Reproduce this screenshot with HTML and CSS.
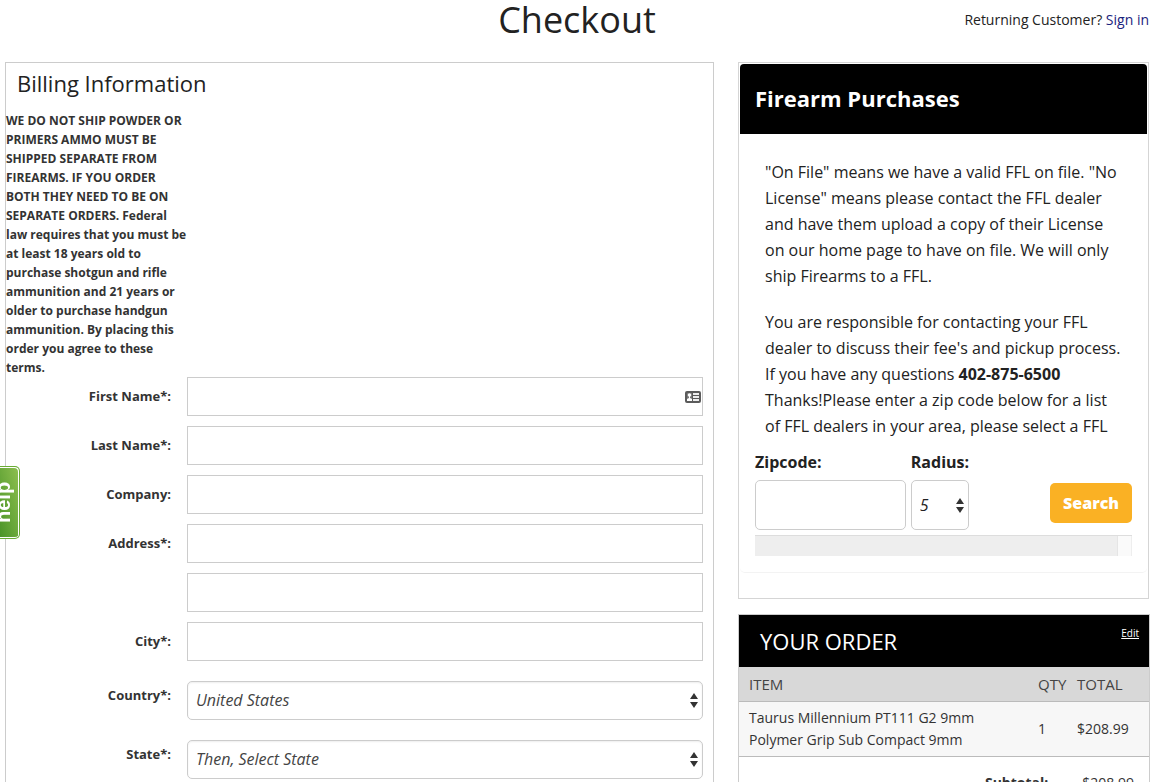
FILE: index.html
```html
<!DOCTYPE html>
<html lang="en">
<head>
    <meta charset="UTF-8">
    <meta name="viewport" content="width=device-width, initial-scale=1.0">
    <title>Checkout</title>
    <link rel="stylesheet" href="styles.css">
</head>
<body>
    <header class="page-header">
        <h1>Checkout</h1>
        <p class="returning">Returning Customer? <a href="#">Sign in</a></p>
    </header>
    <main class="checkout">
        <form class="billing">
            <h2>Billing Information</h2>
            <p class="notice">WE DO NOT SHIP POWDER OR PRIMERS AMMO MUST BE SHIPPED SEPARATE FROM FIREARMS. IF YOU ORDER BOTH THEY NEED TO BE ON SEPARATE ORDERS. Federal law requires that you must be at least 18 years old to purchase shotgun and rifle ammunition and 21 years or older to purchase handgun ammunition. By placing this order you agree to these terms.</p>
            <div class="row">
                <label for="first-name">First Name*:</label>
                <div class="field">
                    <input type="text" id="first-name">
                    <svg class="card-icon" width="16" height="12" viewBox="0 0 16 12" aria-hidden="true">
                        <rect width="16" height="12" rx="2" fill="#5b5b5b"/>
                        <path d="M2 2h5v8H2z" fill="#777"/>
                        <circle cx="4.5" cy="4" r="1.8" fill="#fff"/>
                        <path d="M4 5h1v2l2 1v2H2V8l2-1z" fill="#fff"/>
                        <path d="M8 2h6v2H8zM8 5h6v2H8zM8 8h6v2H8z" fill="#eee"/>
                    </svg>
                </div>
            </div>
            <div class="row">
                <label for="last-name">Last Name*:</label>
                <input type="text" id="last-name">
            </div>
            <div class="row">
                <label for="company">Company:</label>
                <input type="text" id="company">
            </div>
            <div class="row">
                <label for="address">Address*:</label>
                <input type="text" id="address">
            </div>
            <div class="row">
                <span></span>
                <input type="text" id="address2" aria-label="Address line 2">
            </div>
            <div class="row">
                <label for="city">City*:</label>
                <input type="text" id="city">
            </div>
            <div class="row">
                <label for="country">Country*:</label>
                <select id="country">
                    <option>United States</option>
                </select>
            </div>
            <div class="row">
                <label for="state">State*:</label>
                <select id="state">
                    <option>Then, Select State</option>
                </select>
            </div>
        </form>
        <aside class="sidebar">
            <section class="firearm">
                <div class="card">
                    <h3>Firearm Purchases</h3>
                    <div class="card-body">
                        <div class="info">
                            <p>"On File" means we have a valid FFL on file. "No License" means please contact the FFL dealer and have them upload a copy of their License on our home page to have on file. We will only ship Firearms to a FFL.</p>
                            <p>You are responsible for contacting your FFL dealer to discuss their fee's and pickup process. If you have any questions <b>402-875-6500</b> Thanks!Please enter a zip code below for a list of FFL dealers in your area, please select a FFL</p>
                        </div>
                        <form class="search">
                            <div class="zip">
                                <label for="zipcode">Zipcode:</label>
                                <input type="text" id="zipcode">
                            </div>
                            <div class="radius">
                                <label for="radius">Radius:</label>
                                <select id="radius">
                                    <option>5</option>
                                </select>
                            </div>
                            <button type="button">Search</button>
                        </form>
                        <div class="results"></div>
                    </div>
                </div>
            </section>
            <section class="order">
                <div class="order-head">
                    <h3>YOUR ORDER</h3>
                    <a href="#">Edit</a>
                </div>
                <table>
                    <thead>
                        <tr><th>ITEM</th><th class="qty">QTY</th><th class="total">TOTAL</th></tr>
                    </thead>
                    <tbody>
                        <tr><td>Taurus Millennium PT111 G2 9mm Polymer Grip Sub Compact 9mm</td><td>1</td><td>$208.99</td></tr>
                    </tbody>
                </table>
                <dl class="totals">
                    <dt>Subtotal:</dt>
                    <dd>$208.99</dd>
                </dl>
            </section>
        </aside>
    </main>
    <a class="help" href="#"><span>help</span></a>
</body>
</html>
```
FILE: styles.css
```css
* {
    box-sizing: border-box;
}

html {
    scrollbar-width: none;
}

body {
    margin: 0;
    padding: 0 13px 0 5px;
    background-color: #fff;
    color: #222;
    font-family: "Open Sans", "Liberation Sans", sans-serif;
    font-size: 14px;
}

h1, h2, h3, p, dl, dd {
    margin: 0;
    font-weight: normal;
}

/* header */
.page-header {
    display: grid;
    grid-template-columns: 1fr auto 1fr;
    height: 62px;
    padding-right: 1px;
}

.page-header h1 {
    grid-column: 2;
    font-size: 36px;
    line-height: 40px;
}

.returning {
    text-align: right;
    line-height: 40px;
}

.returning a {
    color: #1a237e;
    text-decoration: none;
}

.checkout {
    display: grid;
    grid-template-columns: minmax(0, 1fr) 412px;
    gap: 24px;
}

/* billing form */
.billing {
    border: 1px solid #ccc;
    padding-bottom: 20px;
}

.billing h2 {
    padding: 0 11px;
    font-size: 22px;
    line-height: 40px;
    margin-bottom: 8px;
}

.notice {
    width: 181px;
    color: #333;
    font-size: 12px;
    font-weight: bold;
    line-height: 19px;
}

.row {
    display: grid;
    grid-template-columns: 181px minmax(0, 1fr);
    align-items: center;
    padding-right: 10px;
    margin-bottom: 10px;
}

.row label {
    padding: 0 16px 2px 0;
    color: #333;
    font-size: 13px;
    font-weight: bold;
    text-align: right;
}

input, select {
    display: block;
    width: 100%;
    height: 39px;
    padding: 0 8px;
    border: 1px solid #ccc;
    border-radius: 0;
    background-color: #fff;
    font: inherit;
}

select {
    appearance: none;
    border-radius: 5px;
    color: #444;
    font-size: 16px;
    font-style: italic;
    background-image: url("data:image/svg+xml,%3Csvg xmlns='http://www.w3.org/2000/svg' width='8' height='15'%3E%3Cpath d='M4 0l4 6H0zM4 15l4-6H0z' fill='%23333'/%3E%3C/svg%3E");
    background-repeat: no-repeat;
    background-position: right 4px center;
}

.row select {
    margin-top: 10px;
    padding-bottom: 2px;
    box-shadow: inset 0 1px 2px #eee;
}

.field {
    position: relative;
}

.card-icon {
    position: absolute;
    right: 2px;
    top: 14px;
}

/* firearm card */
.firearm {
    padding: 1px 1px 25px;
    border: 1px solid #d5d5d5;
    margin: 0 1px 15px 0;
}

.card {
    border-bottom: 1px solid #f3f3f3;
    border-radius: 5px;
}

.card h3 {
    padding: 0 15px 2px;
    border-radius: 4px 4px 0 0;
    background-color: #000;
    color: #fff;
    font-size: 22px;
    font-weight: bold;
    line-height: 68px;
}

.card-body {
    padding: 15px 15px 16px;
}

.info {
    padding: 10px 10px 0;
    margin-bottom: 12px;
    font-size: 16px;
    line-height: 26px;
}

.info p + p {
    margin-top: 20px;
}

.search {
    display: flex;
    align-items: flex-end;
    gap: 5px;
    margin-bottom: 5px;
}

.search label {
    display: block;
    margin-bottom: 7px;
    font-size: 16px;
    font-weight: bold;
    line-height: 22px;
}

.search input, .search select {
    height: 50px;
    border-radius: 5px;
}

.search select {
    color: #222;
}

.zip {
    width: 40%;
}

.radius {
    width: 58px;
}

.search button {
    height: 40px;
    padding: 0 13px;
    border: none;
    border-radius: 5px;
    margin: 0 0 7px auto;
    background-color: #fab124;
    color: #fff;
    font: 800 16px "Open Sans", "Liberation Sans", sans-serif;
}

.results {
    height: 21px;
    border-top: 1px solid #ddd;
    background: linear-gradient(to left, #eee 1px, #fafafa 1px, #fafafa 14px, #e5e5e5 14px, #e5e5e5 15px, #eee 15px);
}

/* order summary */
.order {
    border: 1px solid #ccc;
    color: #333;
}

.order-head {
    display: flex;
    justify-content: space-between;
    align-items: flex-start;
    padding: 0 10px 0 21px;
    background-color: #000;
}

.order-head h3 {
    color: #fff;
    font-size: 22px;
    line-height: 52px;
}

.order-head a {
    margin-top: 11px;
    color: #fff;
    font-size: 10px;
}

table {
    width: 100%;
    border-collapse: collapse;
    table-layout: fixed;
}

th, td {
    padding: 5px 0 5px 10px;
    border-bottom: 1px solid #bbb;
    line-height: 22px;
    text-align: left;
}

th {
    height: 34px;
    background-color: #d8d8d8;
    font-size: 15px;
    font-weight: normal;
    color: #444;
}

td {
    background-color: #f7f7f7;
}

td:first-child {
    padding-right: 40px;
}

.qty {
    width: 39px;
}

.total {
    width: 82px;
}

.totals {
    display: grid;
    grid-template-columns: 1fr auto;
    column-gap: 34px;
    padding: 15px;
    line-height: 22px;
}

.totals dt {
    font-weight: bold;
    text-align: right;
}

/* help tab fixed on the left edge */
.help {
    position: fixed;
    left: 0;
    top: 466px;
    display: flex;
    justify-content: flex-end;
    width: 20px;
    height: 73px;
    border: 1px solid #6aac35;
    border-left: none;
    border-radius: 0 5px 5px 0;
    box-shadow: inset -1px 1px #fff, inset 0 -1px #fff;
    background: linear-gradient(75deg, #4a9428, #8fc050);
    color: #fff;
    text-decoration: none;
    overflow: hidden;
}

.help span {
    writing-mode: vertical-rl;
    rotate: 180deg;
    padding-left: 5px;
    font: bold 20px/22px "Liberation Sans", sans-serif;
    text-align: center;
}
```
